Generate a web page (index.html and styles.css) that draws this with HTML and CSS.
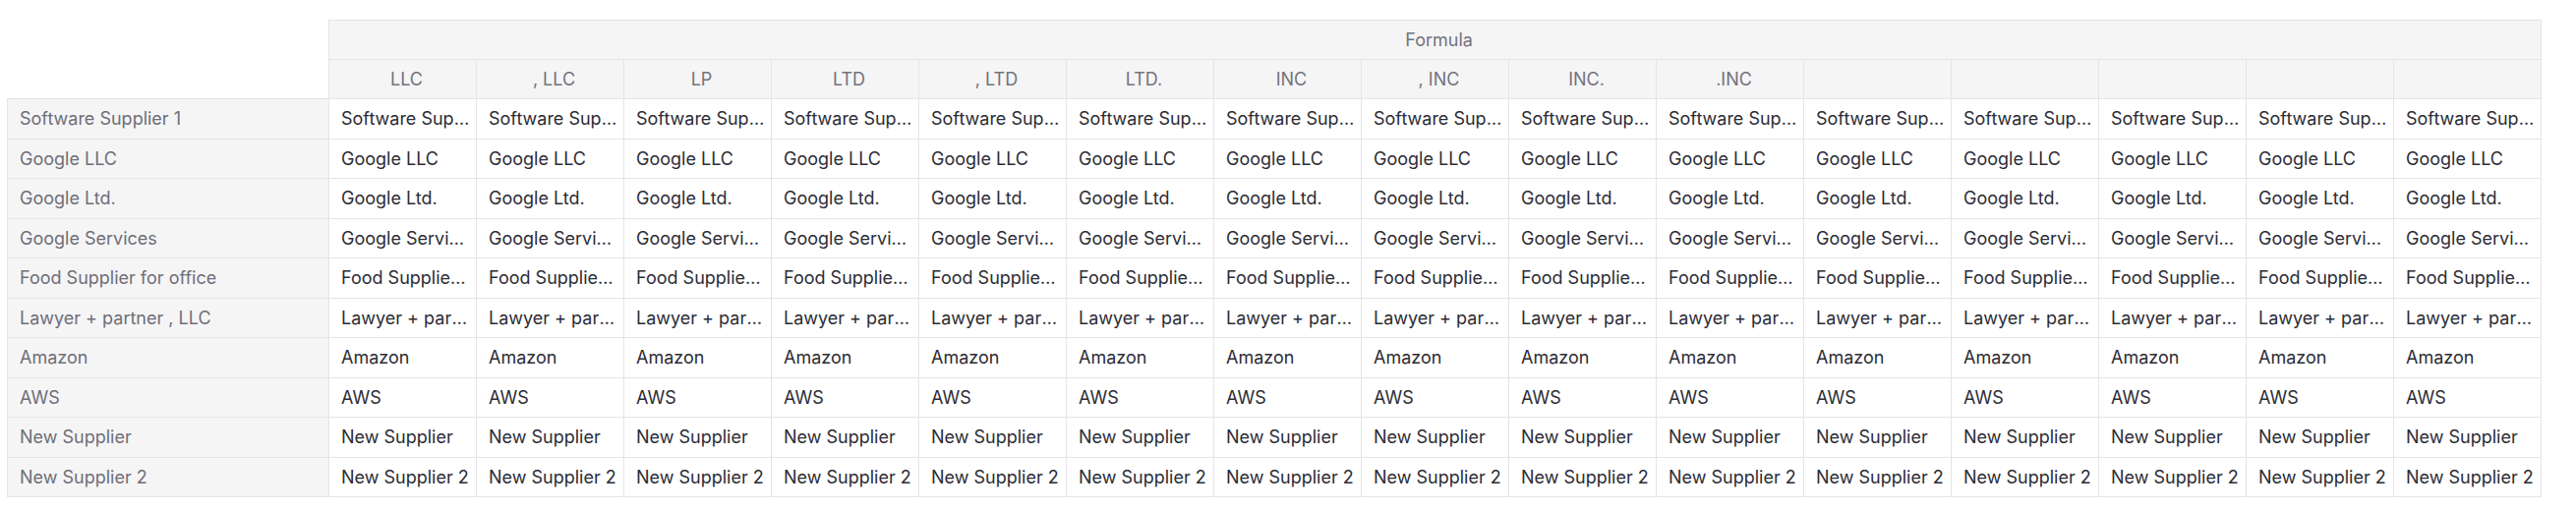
FILE: index.html
```html
<!DOCTYPE html>
<html lang="en">
  <head>
    <meta charset="UTF-8" />
    <meta name="viewport" content="width=device-width, initial-scale=1.0" />
    <title>Supplier names</title>
    <link rel="stylesheet" href="styles.css">
  </head>
  <body>
    <div class="sheet">
      <table class="grid">
        <colgroup>
          <col class="label-col">
          <col span="15" class="value-col">
        </colgroup>
        <thead>
          <tr>
            <th rowspan="2" class="corner"></th>
            <th colspan="15" class="group-head">Formula</th>
          </tr>
          <tr class="js-suffixes"></tr>
        </thead>
        <tbody class="js-rows"></tbody>
      </table>
    </div>

    <script>
      const suffixes = ['LLC', ', LLC', 'LP', 'LTD', ', LTD', 'LTD.', 'INC', ', INC', 'INC.', '.INC', '', '', '', '', ''];
      const suppliers = [
        'Software Supplier 1',
        'Google LLC',
        'Google Ltd.',
        'Google Services',
        'Food Supplier for office',
        'Lawyer + partner , LLC',
        'Amazon',
        'AWS',
        'New Supplier',
        'New Supplier 2'
      ];

      let headHTML = '';
      suffixes.forEach(function(suffix){
        headHTML += `<th class="suffix-head">${suffix}</th>`;
      });
      document.querySelector('.js-suffixes').innerHTML = headHTML;

      let rowsHTML = '';
      suppliers.forEach(function(name){
        let cells = `<th class="row-head">${name}</th>`;
        suffixes.forEach(function(){
          cells += `<td class="cell">${name}</td>`;
        });
        rowsHTML += `<tr>${cells}</tr>`;
      });
      document.querySelector('.js-rows').innerHTML = rowsHTML;
    </script>
  </body>
</html>
```

FILE: styles.css
```css
body{
  margin: 0;
  background-color: white;
  color: #2c2c35;
  font-family: Inter, "Noto Sans", sans-serif;
}
.sheet{
  padding: 20px 0 0 7px;
}
.grid{
  border-collapse: collapse;
  table-layout: fixed;
  width: 2577px;
  font-size: 18px;
}
.label-col{
  width: 327px;
}
.value-col{
  width: 150px;
}
.grid th, .grid td{
  border: 1px solid #e4e4e9;
  height: 39px;
  padding: 0 4px 0 12px;
  text-align: left;
  font-weight: normal;
  white-space: nowrap;
  overflow: hidden;
  text-overflow: ellipsis;
}
.grid .corner{
  border: none;
  background-color: white;
}
.group-head, .suffix-head{
  background-color: #f5f5f6;
  color: #73737c;
}
.grid .group-head, .grid .suffix-head{
  text-align: center;
}
.row-head{
  background-color: #f5f5f6;
  color: #6e6e78;
}
.grid tbody td, .grid tbody th{
  height: 39.5px;
}
```
